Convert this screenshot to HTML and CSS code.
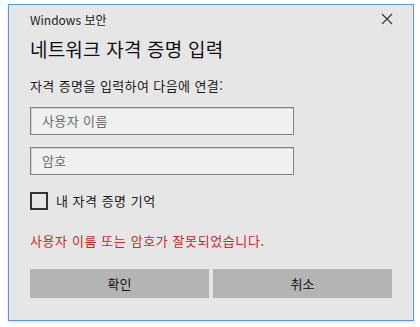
FILE: index.html
```html
<!DOCTYPE html>
<html lang="ko">
<head>
    <meta charset="UTF-8">
    <title>Windows 보안</title>
    <link rel="stylesheet" href="styles.css">
</head>
<body>
    <div class="dialog">
        <div class="titlebar">
            <span class="app-name">Windows 보안</span>
            <span class="close">
                <svg width="12" height="12" viewBox="0 0 12 12"><path d="M1 1L11 11M11 1L1 11" stroke="#333" stroke-width="1.1" fill="none"/></svg>
            </span>
        </div>
        <h1>네트워크 자격 증명 입력</h1>
        <p class="prompt">자격 증명을 입력하여 다음에 연결:</p>

        <div class="field">사용자 이름</div>
        <div class="field">암호</div>

        <label class="remember">
            <span class="checkbox"></span>
            <span>내 자격 증명 기억</span>
        </label>

        <p class="error">사용자 이름 또는 암호가 잘못되었습니다.</p>

        <div class="buttons">
            <div class="btn">확인</div>
            <div class="btn">취소</div>
        </div>
    </div>
</body>
</html>
```

FILE: styles.css
```css
body {
    margin: 0;
    padding: 4px 6px 6px 8px;
    background-color: #fff;
    font-family: 'Noto Sans CJK KR', 'Noto Sans', sans-serif;
    color: #1a1a1a;
}
.dialog {
    box-sizing: border-box;
    width: 406px;
    height: 317px;
    padding: 0 22px 0 21px;
    background-color: #e6e6e6;
    border: 1px solid #5b9bd5;
    box-shadow: 0 1px 2px rgba(0, 0, 0, 0.15);
}
.titlebar {
    display: flex;
    justify-content: space-between;
    align-items: center;
    height: 28px;
}
.app-name {
    font-size: 12px;
    color: #222;
}
.close {
    display: flex;
    margin-right: -2px;
}
h1 {
    margin: 3px 0 0;
    font-size: 19px;
    font-weight: normal;
    line-height: 26px;
    letter-spacing: 0.2px;
    color: #111;
}
.prompt {
    margin: 15px 0 0;
    font-size: 13px;
    line-height: 18px;
    letter-spacing: 0.4px;
}
.field {
    width: 264px;
    height: 28px;
    box-sizing: border-box;
    margin-top: 12px;
    padding: 0 11px;
    border: 1px solid #7f7f7f;
    box-shadow: inset 1px 1px 0 #d4d4d4;
    background-color: #f0f0f0;
    font-size: 13px;
    line-height: 26px;
    letter-spacing: 0.4px;
    color: #6d6d6d;
}
.remember {
    display: flex;
    align-items: center;
    gap: 8px;
    margin-top: 16px;
    font-size: 13px;
    letter-spacing: 0.5px;
}
.checkbox {
    width: 18px;
    height: 18px;
    box-sizing: border-box;
    border: 2px solid #333;
}
.error {
    margin: 22px 0 0;
    font-size: 13px;
    line-height: 18px;
    letter-spacing: 0.6px;
    color: #c42b2b;
}
.buttons {
    display: flex;
    gap: 4px;
    width: 362px;
    margin-top: 19px;
}
.btn {
    flex: 1;
    height: 29px;
    background-color: #b4b4b4;
    text-align: center;
    font-size: 13px;
    line-height: 29px;
    color: #111;
}
```
